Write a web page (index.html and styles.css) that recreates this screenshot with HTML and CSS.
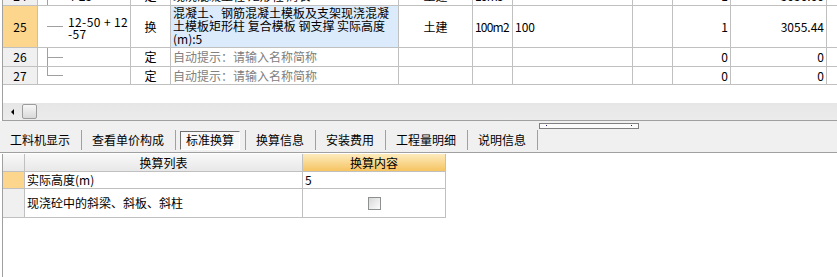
FILE: index.html
```html
<!DOCTYPE html>
<html lang="zh">
<head>
<meta charset="utf-8">
<title>标准换算</title>
<link rel="stylesheet" href="styles.css">
</head>
<body>
<div class="top-panel">
  <div class="grid-area">
    <div class="row row-24">
      <div class="c num">24</div>
      <div class="c code"><span class="branch tee"></span>4-23</div>
      <div class="c type">定</div>
      <div class="c name">现浇混凝土柱 矩形柱 周长</div>
      <div class="c major">土建</div>
      <div class="c unit">10m3</div>
      <div class="c qty"></div>
      <div class="c blank"></div>
      <div class="c n">1</div>
      <div class="c n">3030.00</div>
      <div class="c end"></div>
    </div>
    <div class="row row-25">
      <div class="c num current">25</div>
      <div class="c code code-multi"><span class="branch h"></span><span class="code-text">12-50 + 12<br>-57</span></div>
      <div class="c type">换</div>
      <div class="c name selected">混凝土、钢筋混凝土模板及支架现浇混凝<br>土模板矩形柱 复合模板 钢支撑 实际高度<br>(m):5</div>
      <div class="c major">土建</div>
      <div class="c unit">100m2</div>
      <div class="c qty">100</div>
      <div class="c blank"></div>
      <div class="c n">1</div>
      <div class="c n">3055.44</div>
      <div class="c end"></div>
    </div>
    <div class="row row-26">
      <div class="c num">26</div>
      <div class="c code"><span class="branch tee"></span></div>
      <div class="c type">定</div>
      <div class="c name hint">自动提示：请输入名称简称</div>
      <div class="c major"></div>
      <div class="c unit"></div>
      <div class="c qty"></div>
      <div class="c blank"></div>
      <div class="c n">0</div>
      <div class="c n">0</div>
      <div class="c end"></div>
    </div>
    <div class="row row-27">
      <div class="c num">27</div>
      <div class="c code"><span class="branch elbow"></span></div>
      <div class="c type">定</div>
      <div class="c name hint">自动提示：请输入名称简称</div>
      <div class="c major"></div>
      <div class="c unit"></div>
      <div class="c qty"></div>
      <div class="c blank"></div>
      <div class="c n">0</div>
      <div class="c n">0</div>
      <div class="c end"></div>
    </div>
  </div>
  <div class="hscroll">
    <span class="arrow"></span>
    <span class="thumb"></span>
  </div>
</div>

<div class="tabbar">
  <div class="tab">工料机显示</div>
  <div class="tab">查看单价构成</div>
  <div class="tab active"><span class="tab-box">标准换算</span></div>
  <div class="tab">换算信息</div>
  <div class="tab">安装费用</div>
  <div class="tab">工程量明细</div>
  <div class="tab">说明信息</div>
  <div class="grip"></div>
</div>

<div class="bottom-panel">
  <div class="conv">
    <div class="cc hdr"></div>
    <div class="cc hdr">换算列表</div>
    <div class="cc hdr hl">换算内容</div>

    <div class="cc rh cur"></div>
    <div class="cc lbl">实际高度(m)</div>
    <div class="cc val">5</div>

    <div class="cc rh"></div>
    <div class="cc lbl">现浇砼中的斜梁、斜板、斜柱</div>
    <div class="cc chk-cell"><span class="chk"></span></div>
  </div>
</div>
</body>
</html>
```

FILE: styles.css
```css
html, body {
  margin: 0;
  padding: 0;
}

body {
  width: 837px;
  height: 277px;
  overflow: hidden;
  background: #ffffff;
  color: #000000;
  font-family: "Noto Sans CJK SC", "Noto Sans", sans-serif;
  font-size: 12px;
  line-height: 12px;
}

/* ---------- top grid ---------- */
.top-panel {
  margin-left: 2px;
  border-left: 1px solid #a0a0a0;
  border-bottom: 1px solid #a0a0a0;
}

.grid-area {
  height: 103px;
  overflow: hidden;
  background: #ffffff;
}

.row {
  display: grid;
  grid-template-columns: 35px 93px 40px 228px 74px 40px 120px 40px 58px 96px 1fr;
}

.row-24 { height: 19px; margin-top: -13px; }
.row-25 { height: 42px; }
.row-26 { height: 19px; }
.row-27 { height: 18px; }

.c {
  box-sizing: border-box;
  border-right: 1px solid #c0c0c0;
  border-bottom: 1px solid #c0c0c0;
  display: flex;
  align-items: center;
  white-space: nowrap;
  overflow: hidden;
}

.c.end { border-right: none; }

.num {
  justify-content: center;
  background: #f0f0f0;
}

.num.current { background: #fdd68e; }

.code {
  padding-left: 9px;
}

.code-multi { padding-top: 2px; }

.code-text {
  line-height: 12px;
  letter-spacing: 0.4px;
}

.branch {
  flex: none;
  width: 16px;
  align-self: stretch;
  margin-right: 5px;
}

.code-multi .branch { margin-top: -2px; }

.branch.h {
  background: linear-gradient(#a0a0a0, #a0a0a0) left center / 16px 1px no-repeat;
}

.branch.tee {
  background:
    linear-gradient(#a0a0a0, #a0a0a0) left top / 1px 100% no-repeat,
    linear-gradient(#a0a0a0, #a0a0a0) left center / 16px 1px no-repeat;
}

.branch.elbow {
  background:
    linear-gradient(#a0a0a0, #a0a0a0) left top / 1px 50% no-repeat,
    linear-gradient(#a0a0a0, #a0a0a0) left center / 16px 1px no-repeat;
}

.type { justify-content: center; }

.name { padding-left: 2px; }

.name.selected {
  background: #dcebfc;
  align-items: flex-start;
  padding-top: 0;
  line-height: 13px;
}

.hint { color: #808080; }

.major { justify-content: center; }

.unit, .qty { padding-left: 2px; }

.unit { letter-spacing: -0.8px; }

.n {
  justify-content: flex-end;
  padding-right: 2px;
}

/* ---------- horizontal scrollbar ---------- */
.hscroll {
  height: 17px;
  display: flex;
  align-items: center;
  background: linear-gradient(#e6e6e6, #ececec);
}

.arrow {
  width: 0;
  height: 0;
  margin-left: 8px;
  border-right: 3px solid #000000;
  border-top: 3px solid transparent;
  border-bottom: 3px solid transparent;
}

.thumb {
  margin-left: 8px;
  width: 15px;
  height: 15px;
  box-sizing: border-box;
  border: 1px solid #9c9c9c;
  border-radius: 2px;
  background: linear-gradient(#f7f7f7, #d9d9d9);
}

/* ---------- tab bar ---------- */
.tabbar {
  display: flex;
  height: 31px;
  background: #f0f0f0;
  border-bottom: 1px solid #a0a0a0;
}

.tab {
  display: flex;
  align-items: center;
  height: 20px;
  margin-top: 9px;
  padding: 0 11px 0 10px;
  border-right: 1px solid #a0a0a0;
  white-space: nowrap;
}

.tab.active { padding: 0 5px 0 4px; }

.tab-box {
  width: 60px;
  height: 19px;
  box-sizing: border-box;
  display: flex;
  align-items: center;
  justify-content: center;
  border: 1px solid;
  border-color: #6f6f6f #ffffff #ffffff #6f6f6f;
  background: #f8f8f8;
}

.grip {
  align-self: flex-start;
  margin-top: 2px;
  margin-left: 1px;
  width: 100px;
  height: 6px;
  box-sizing: border-box;
  border: 1px solid #808080;
  background:
    linear-gradient(#1a1a6e, #1a1a6e) 6px 1px / 1px 1px no-repeat,
    linear-gradient(#1a1a6e, #1a1a6e) 91px 1px / 1px 1px no-repeat,
    #fbfbfb;
}

/* ---------- bottom panel ---------- */
.bottom-panel {
  margin-left: 2px;
  height: 124px;
  border-left: 1px solid #a0a0a0;
  background: #ffffff;
}

.conv {
  margin-top: 1px;
  display: grid;
  grid-template-columns: 22px 278px 143px;
  grid-template-rows: 18px 17px 29px;
}

.cc {
  box-sizing: border-box;
  border-right: 1px solid #c0c0c0;
  border-bottom: 1px solid #c0c0c0;
  display: flex;
  align-items: center;
  white-space: nowrap;
}

.hdr {
  justify-content: center;
  background: linear-gradient(#f8f8f8, #e8e8e8);
}

.hdr.hl {
  background: linear-gradient(#fdebbd, #f6c462);
}

.rh { background: #f0f0f0; }
.rh.cur { background: #fdd68e; }

.lbl, .val { padding-left: 2px; }

.chk-cell { justify-content: center; }

.chk {
  width: 13px;
  height: 13px;
  box-sizing: border-box;
  border: 1px solid #8e8f8f;
  background: linear-gradient(135deg, #d8d8d8, #fdfdfd);
}
```
